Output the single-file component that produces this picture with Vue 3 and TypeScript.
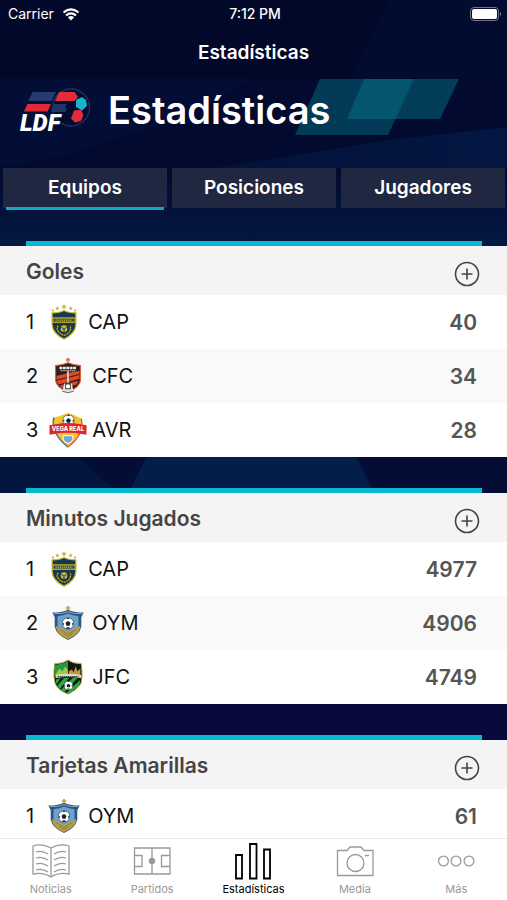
<script setup lang="ts">
import { ref } from 'vue'

type Crest = 'cap' | 'cfc' | 'avr' | 'oym' | 'jfc'
interface Entry { code: string; crest: Crest; value: number }
interface Board { title: string; entries: Entry[] }

const filters: string[] = ['Equipos', 'Posiciones', 'Jugadores']
const activeFilter = ref<string>('Equipos')

const boards: Board[] = [
  {
    title: 'Goles',
    entries: [
      { code: 'CAP', crest: 'cap', value: 40 },
      { code: 'CFC', crest: 'cfc', value: 34 },
      { code: 'AVR', crest: 'avr', value: 28 },
    ],
  },
  {
    title: 'Minutos Jugados',
    entries: [
      { code: 'CAP', crest: 'cap', value: 4977 },
      { code: 'OYM', crest: 'oym', value: 4906 },
      { code: 'JFC', crest: 'jfc', value: 4749 },
    ],
  },
  {
    title: 'Tarjetas Amarillas',
    entries: [{ code: 'OYM', crest: 'oym', value: 61 }],
  },
]

const tabs: { id: string; label: string }[] = [
  { id: 'news', label: 'Noticias' },
  { id: 'matches', label: 'Partidos' },
  { id: 'stats', label: 'Estadísticas' },
  { id: 'media', label: 'Media' },
  { id: 'more', label: 'Más' },
]
const activeTab = 'stats'
</script>

<template>
  <div class="app">
    <svg class="backdrop" viewBox="0 0 507 900" preserveAspectRatio="none" aria-hidden="true">
      <defs>
        <linearGradient id="lower" x1="0" y1="0" x2="0" y2="1">
          <stop offset="0" stop-color="#020a2e" />
          <stop offset="1" stop-color="#031a47" />
        </linearGradient>
        <linearGradient id="slope" x1="0" y1="0" x2="1" y2="0">
          <stop offset="0" stop-color="#03123a" />
          <stop offset="1" stop-color="#021742" />
        </linearGradient>
      </defs>
      <rect width="507" height="900" fill="#020829" />
      <path d="M390 0H507V79H350Z" fill="#020c30" />
      <path d="M0 79H507V170H0Z" fill="#020a2f" />
      <path d="M0 168L60 157L200 112L250 79H0Z" fill="#020e35" />
      <path d="M0 165H507V260H0Z" fill="url(#lower)" />
      <path d="M215 168L390 140L507 127V168Z" fill="url(#slope)" />
      <rect y="440" width="507" height="60" fill="#030d35" />
      <path d="M0 440H60L125 500H0Z" fill="#021640" />
      <path d="M125 500L155 440H348L378 500Z" fill="#021e49" />
      <rect y="690" width="507" height="60" fill="#080a3b" />
      <path d="M320 79H414L388 135H295Z" fill="#04697f" opacity=".5" />
      <path d="M364 79H459L440 119H347Z" fill="#057085" opacity=".5" />
    </svg>

    <svg class="defs" width="0" height="0" aria-hidden="true">
      <symbol id="ball" viewBox="0 0 20 20">
        <circle cx="10" cy="10" r="9.4" fill="#fff" stroke="#26303c" stroke-width="1" />
        <path d="M10 6L14 9L12.500 13.500H7.500L6 9ZM7 1.200L10 3L13 1.200ZM.9 8L3.500 10L2.500 14ZM19.100 8L16.500 10L17.500 14ZM6.500 18.500L8 16H12L13.500 18.500Z" fill="#17202b" />
      </symbol>
      <symbol id="crest-cap" viewBox="0 0 40 40">
        <path d="M20 1l.9 1.800 2 .3-1.500 1.400.4 2L20 5.500l-1.800 1 .4-2L17.100 3.100l2-.3ZM13 3.500l.7 1.300 1.500.2-1.100 1 .3 1.500-1.400-.7-1.400.7.3-1.500-1.100-1 1.500-.2ZM27 3.500l.7 1.300 1.500.2-1.100 1 .3 1.500-1.400-.7-1.400.7.3-1.500-1.100-1 1.500-.2ZM8.500 6l.5 1.100 1.200.2-.9.800.2 1.200-1-.6-1.100.6.2-1.200-.8-.8 1.200-.2ZM31.500 6l.5 1.100 1.200.2-.9.800.2 1.200-1-.6-1.100.6.2-1.200-.8-.8 1.200-.2Z" fill="#cbb447" />
        <path d="M20 8Q24 10.500 32.500 10.500V23Q32 32 20 38Q8 32 7.500 23V10.500Q16 10.500 20 8Z" fill="#18384b" stroke="#c9b52f" stroke-width="1.300" />
        <path d="M8 15H32V21H8Z" fill="#b9aa32" />
        <path d="M9 16.500H31V19.500H9Z" fill="#26424a" />
        <path d="M11 18H29" stroke="#cab83b" stroke-width="1.300" stroke-dasharray="1.500 .7" />
        <path d="M14 24Q11 27 15 31Q17 33 20 34Q24 33 26 30Q28 26 26 24" fill="none" stroke="#c9b52f" stroke-width="1.300" stroke-dasharray="2 .7" />
        <circle cx="20" cy="27" r="3.500" fill="#d0bb34" />
        <path d="M17 25.500L20 27.500L23 25.500M20 27.500V30.500" fill="none" stroke="#18384b" stroke-width="1" />
      </symbol>
      <symbol id="crest-cfc" viewBox="0 0 40 40">
        <circle cx="20" cy="3" r="2" fill="#e5653d" />
        <path d="M19 4H21V8H19Z" fill="#edb4a0" />
        <path d="M7 9Q13 9 20 6Q27 9 33 9V25Q32 32 20 37Q8 32 7 25Z" fill="#2a2020" stroke="#df5633" stroke-width="1.200" />
        <path d="M8 20L32 14V18L8 24ZM8 25L32 19V23L10 29ZM11 30L31 25L29 29L14 33Z" fill="#dd4a2a" />
        <path d="M8 10H32V15H8Z" fill="#2a2020" />
        <path d="M11 11.500H29" stroke="#f2e9e5" stroke-width="2.600" stroke-dasharray="3 .6" />
        <path d="M12 14.500H28" stroke="#d8ccc6" stroke-width="1.200" stroke-dasharray="1.500 .5" />
        <path d="M19.200 15H20.800V29H19.200Z" fill="#f6eeea" />
        <path d="M16 28H24L26 37Q20 40 14 37Z" fill="#e9e4df" />
        <path d="M17 27H23V34H17Z" fill="#4b4642" />
        <circle cx="20" cy="31" r="2.200" fill="#fff" />
        <path d="M14 36Q20 39 26 36" fill="none" stroke="#7a655b" />
      </symbol>
      <symbol id="crest-avr" viewBox="0 0 40 40">
        <path d="M4 7Q13 5 20 2Q28 4 34 8Q39 23 20 38Q1 24 4 7Z" fill="#f2c42c" />
        <path d="M5 7Q2 24 20 38" fill="none" stroke="#4475b8" stroke-width="1.500" />
        <path d="M34 8Q38 24 20 38" fill="none" stroke="#d84a39" stroke-width="1.200" />
        <use href="#ball" x="14" y="3.500" width="13" height="13" />
        <path d="M7 14Q20 11 33 14L39.500 15V25L33 24Q20 22 7 24L.5 25V15Z" fill="#dc2631" />
        <path d="M15 26H25V30Q23 34 20 34Q16 33 15 30Z" fill="#75a8d8" stroke="#fff" stroke-width="1" />
      </symbol>
      <symbol id="crest-oym" viewBox="0 0 40 40">
        <path d="M19 2H21V7H19ZM17.500 3.500H22.500V5H17.500Z" fill="#c4a64f" />
        <path d="M3.500 9Q13 9 20 6Q27 9 36.500 9L34 14V24Q32 33 20 38Q8 33 6 24V14Z" fill="#2e5781" />
        <path d="M9 13Q16 12 20 10Q25 12 31 13V24Q29 31 20 35Q11 31 9 24Z" fill="#6aa3d1" />
        <path d="M7 23L20 29L33 23Q33 32 20 37Q8 33 7 23Z" fill="#b69b45" />
        <path d="M12 27L20 32L29 27M15 31L20 34L25 31" fill="none" stroke="#8e8143" />
        <use href="#ball" x="13.500" y="14" width="13" height="13" />
        <path d="M5 10Q14 11 20 8Q26 11 35 10" fill="none" stroke="#91a8b9" stroke-width="1" />
      </symbol>
      <symbol id="crest-jfc" viewBox="0 0 40 40">
        <path d="M20 2Q25 6 34 6Q36 23 33 28Q29 34 20 38Q10 34 7 28Q4 22 6 6Q15 6 20 2Z" fill="#11190f" stroke="#c4a844" stroke-width="1" />
        <path d="M20 3V19H6V7Q15 7 20 3Z" fill="#229842" />
        <path d="M7 17L11 11L14 14L17 9L20 13V19H7Z" fill="#9ccb3c" />
        <path d="M21 18V14L24 12L26 15L28 9L30 14L33 11V18Z" fill="#c5963e" />
        <path d="M7 18Q20 15 34 18V21Q20 19 7 21Z" fill="#ddd7c2" />
        <path d="M9 19.500H31" stroke="#344835" stroke-width="1.200" stroke-dasharray="1.500 .6" />
        <path d="M7 23L12 21L8 28ZM16 21H21L11 33L9 29ZM25 21H30L16 36L12 34ZM33 23L32 29L22 37L18 37Z" fill="#2baa42" />
        <use href="#ball" x="15.500" y="24" width="10" height="10" />
      </symbol>
    </svg>

    <div class="status">
      <div class="carrier">
        <span>Carrier</span>
        <svg class="wifi" viewBox="0 0 18 13" aria-hidden="true">
          <path d="M1.500 4.500Q9-1.800 16.500 4.500M4 7.500Q9 3.300 14 7.500" fill="none" stroke="#fff" stroke-width="2.200" />
          <path d="M5.900 9.300Q9 6.900 12.100 9.300L9 12.500Z" fill="#fff" />
        </svg>
      </div>
      <span class="clock">7:12 PM</span>
      <svg class="battery" viewBox="0 0 32 14" aria-hidden="true">
        <rect x=".5" y=".5" width="28" height="13" rx="3.500" fill="none" stroke="#73748c" />
        <rect x="2" y="2" width="25" height="10" rx="2" fill="#fff" />
        <path d="M30 5Q32 7 30 9Z" fill="#9899aa" />
      </svg>
    </div>

    <div class="nav-title">Estadísticas</div>

    <header class="hero">
      <svg class="logo" viewBox="0 0 72 46" role="img" aria-label="LDF">
        <circle cx="51" cy="20.500" r="18.500" fill="#030c2f" stroke="#20315d" stroke-width="1.300" />
        <path d="M12.500 5H36L31.500 14H8.500Z" fill="#263c70" />
        <path d="M7.500 17H31L27.500 24.500H4Z" fill="#dd2b38" />
        <path d="M39 5H54.500L58 10L54.500 14H35Z" fill="#e32c39" />
        <path d="M34 17H47L45 20L47 23L45 25H31Z" fill="#203665" />
        <path d="M56 13L62 10L66 13L67 19L62 23.500L56 20Z" fill="#13b4cc" />
        <path d="M54 23.500L61 22.500L63.500 28L61 34L55 35.500L51 31.500Z" fill="#e32c39" />
        <text x="0" y="44" class="logo-text">LDF</text>
      </svg>
      <h1>Estadísticas</h1>
    </header>

    <div class="filters">
      <button
        v-for="filter in filters"
        :key="filter"
        type="button"
        :class="['filter', { active: filter === activeFilter }]"
        :aria-pressed="filter === activeFilter"
        @click="activeFilter = filter"
      >{{ filter }}</button>
    </div>

    <main class="boards">
      <section v-for="board in boards" :key="board.title" class="board">
        <div class="accent"></div>
        <div class="board-head">
          <h2>{{ board.title }}</h2>
          <button type="button" class="more" :aria-label="board.title">
            <svg viewBox="0 0 26 26" aria-hidden="true">
              <circle cx="13" cy="13" r="11.500" />
              <path d="M7.500 13H18.500M13 7.500V18.500" />
            </svg>
          </button>
        </div>
        <table>
          <tbody>
            <tr v-for="(entry, index) in board.entries" :key="entry.code">
              <th scope="row">
                <div class="team">
                  <span>{{ index + 1 }}</span>
                  <svg class="crest" viewBox="0 0 40 40" aria-hidden="true">
                    <use :href="`#crest-${entry.crest}`" width="40" height="40" />
                    <text v-if="entry.crest === 'avr'" x="20" y="21" text-anchor="middle" class="crest-text">VEGA REAL</text>
                  </svg>
                  <span>{{ entry.code }}</span>
                </div>
              </th>
              <td>{{ entry.value }}</td>
            </tr>
          </tbody>
        </table>
      </section>
    </main>

    <nav class="tabbar">
      <a v-for="tab in tabs" :key="tab.id" href="#" :class="['tab', { current: tab.id === activeTab }]">
        <svg v-if="tab.id === 'news'" viewBox="0 0 40 40" aria-hidden="true">
          <path d="M20 7Q11 2 2 5V33Q12 31 20 36Q28 31 38 33V5Q29 2 20 7V36" />
          <path d="M5 11Q11 9 17 13M5 17Q11 15 17 19M5 23Q11 21 17 25M5 29Q11 27 17 31M35 11Q29 9 23 13M35 17Q29 15 23 19M35 23Q29 21 23 25M35 29Q29 27 23 31" />
        </svg>
        <svg v-else-if="tab.id === 'matches'" viewBox="0 0 40 40" aria-hidden="true">
          <path d="M2.500 7H38V33H2.500ZM20 7V33M2.500 14.500H10V25.500H2.500M38 14.500H29.500V25.500H38" />
          <circle cx="20" cy="20" r="2.500" fill="currentColor" />
        </svg>
        <svg v-else-if="tab.id === 'stats'" class="bars" viewBox="0 0 40 40" aria-hidden="true">
          <path d="M3 14H9V37.500H3ZM17 3H23.500V37.500H17ZM31 8.500H37V37.500H31Z" />
        </svg>
        <svg v-else-if="tab.id === 'media'" viewBox="0 0 40 40" aria-hidden="true">
          <path d="M2.500 9.500H12L15 6H26L29 9.500H38V34.500H2.500ZM30 14.500H34" />
          <circle cx="20.500" cy="22" r="8.500" />
        </svg>
        <svg v-else viewBox="0 0 40 40" aria-hidden="true">
          <circle cx="7.500" cy="20" r="4.900" />
          <circle cx="20" cy="20" r="4.900" />
          <circle cx="33" cy="20" r="4.900" />
        </svg>
        <span>{{ tab.label }}</span>
      </a>
    </nav>
  </div>
</template>

<style>
body {
  margin: 0;
  background: #020829;
}
</style>

<style scoped>
.app {
  position: relative;
  isolation: isolate;
  display: flex;
  flex-direction: column;
  height: 100vh;
  overflow: hidden;
  color: #fff;
  font-family: Inter, "Liberation Sans", sans-serif;
}
.backdrop {
  position: absolute;
  inset: 0;
  z-index: -1;
  width: 100%;
  height: 100%;
}
.defs {
  position: absolute;
}
.status {
  display: grid;
  grid-template-columns: 1fr auto 1fr;
  align-items: center;
  flex: none;
  height: 28px;
  padding: 0 5px 0 8px;
  font-size: 14px;
  line-height: 28px;
}
.carrier {
  display: flex;
  align-items: center;
  gap: 8px;
}
.wifi {
  width: 18px;
  height: 13px;
}
.clock {
  font-weight: 500;
}
.battery {
  justify-self: end;
  width: 32px;
  height: 14px;
}
.nav-title {
  flex: none;
  font-size: 19px;
  font-weight: 600;
  line-height: 50px;
  text-align: center;
}
.hero {
  display: flex;
  align-items: center;
  flex: none;
  gap: 16px;
  height: 64px;
  padding-left: 20px;
}
.logo {
  width: 72px;
  height: 46px;
  overflow: visible;
}
.logo-text {
  fill: #fff;
  font-family: Roboto, sans-serif;
  font-size: 24px;
  font-style: italic;
  font-weight: 900;
}
h1 {
  margin: 0;
  font-size: 38px;
  font-weight: 600;
  line-height: 48px;
}
.filters {
  display: grid;
  grid-template-columns: repeat(3, 1fr);
  flex: none;
  gap: 5px;
  padding: 26px 2px 0 3px;
}
.filter {
  position: relative;
  height: 40px;
  padding: 0;
  border: 0;
  background: #202841;
  color: #fff;
  font: 600 19px/40px Inter, "Liberation Sans", sans-serif;
}
.filter.active::after {
  content: "";
  position: absolute;
  right: 3px;
  bottom: -2px;
  left: 3px;
  height: 3px;
  background: #10aac0;
}
.boards {
  display: flex;
  flex: 1;
  flex-direction: column;
  gap: 31px;
  min-height: 0;
  padding-top: 33px;
  overflow-y: auto;
  scrollbar-width: none;
}
.board {
  flex: none;
}
.accent {
  height: 5px;
  margin: 0 25px 0 26px;
  background: #06b8d0;
}
.board-head {
  display: flex;
  align-items: center;
  justify-content: space-between;
  box-sizing: border-box;
  height: 49px;
  padding: 2px 27px 0 26px;
  background: #f4f4f4;
}
h2 {
  margin: 0;
  color: #444;
  font-size: 21px;
  font-weight: 600;
  line-height: 28px;
}
.more {
  display: flex;
  padding: 4px 0 0;
  border: 0;
  background: none;
}
.more svg {
  width: 26px;
  height: 26px;
  fill: none;
  stroke: #444;
  stroke-width: 1.6;
}
table {
  width: 100%;
  border-collapse: collapse;
  background: #fff;
  color: #111;
  font-size: 20px;
}
tr:nth-child(even) {
  background: #f9f9f9;
}
th,
td {
  height: 54px;
  padding: 0;
}
th {
  padding-left: 26px;
  font-weight: 400;
}
td {
  padding-right: 30px;
  color: #555;
  font-size: 21px;
  font-weight: 600;
  text-align: right;
}
.team {
  display: flex;
  align-items: center;
}
.crest {
  width: 38px;
  height: 38px;
  margin: 0 5px 0 11px;
  overflow: visible;
}
.crest-text {
  fill: #fff;
  font-size: 6px;
  font-weight: 800;
}
.tabbar {
  display: grid;
  grid-template-columns: repeat(5, 1fr);
  flex: none;
  height: 62px;
  box-sizing: border-box;
  border-top: 1px solid #e8e8e8;
  background: #fff;
}
.tab {
  display: flex;
  flex-direction: column;
  align-items: center;
  color: #999;
  font-size: 11px;
  line-height: 16px;
  text-decoration: none;
}
.tab svg {
  width: 40px;
  height: 40px;
  margin-top: 2px;
  fill: none;
  stroke: currentColor;
  stroke-width: 1.3;
}
.tab.current {
  color: #000;
}
.tab .bars {
  stroke-width: 1.8;
}
</style>
